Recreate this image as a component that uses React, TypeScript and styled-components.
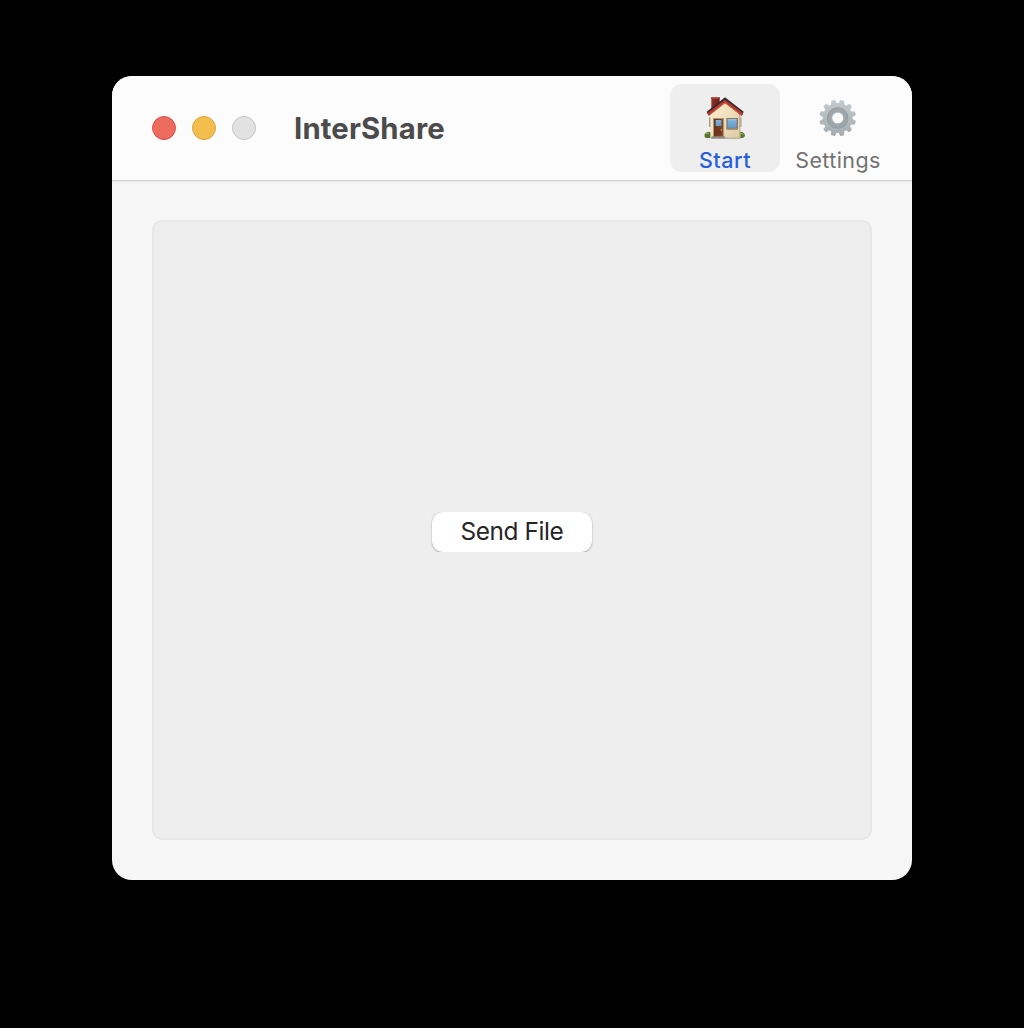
import React from "react";
import styled, { createGlobalStyle } from "styled-components";

const GlobalStyle = createGlobalStyle`
  * { box-sizing: border-box; }
  html, body { margin: 0; background: #000; }
  body { font-family: Inter, "Liberation Sans", sans-serif; -webkit-font-smoothing: antialiased; }
`;

const Desktop = styled.div`
  height: 1028px;
  padding: 76px 112px 148px;
  background: #000;
`;

const Window = styled.main`
  display: flex;
  flex-direction: column;
  height: 804px;
  border-radius: 20px;
  overflow: hidden;
  background: #f6f6f6;
`;

const TitleBar = styled.header`
  display: flex;
  align-items: center;
  height: 105px;
  padding: 0 19px 0 40px;
  background: #fcfcfc;
  border-bottom: 1px solid #cfcfcf;
`;

const TrafficLights = styled.div`
  display: flex;
  gap: 16px;
`;

const Light = styled.span<{ $fill: string; $edge: string }>`
  width: 24px;
  height: 24px;
  border-radius: 50%;
  background: ${(p) => p.$fill};
  border: 1px solid ${(p) => p.$edge};
`;

const Title = styled.h1`
  margin: 0 auto 0 38px;
  padding-top: 2px;
  font-size: 29.3px;
  font-weight: 650;
  line-height: 36px;
  letter-spacing: 0.15px;
  color: #4b4b4b;
`;

const Tabs = styled.nav`
  display: flex;
  gap: 3px;
`;

const Tab = styled.button<{ $active?: boolean }>`
  display: flex;
  flex-direction: column;
  align-items: center;
  gap: 4px;
  width: 110px;
  height: 88px;
  padding: 4px 0 0;
  border: 0;
  border-radius: 12px;
  background: ${(p) => (p.$active ? "#eeeeee" : "transparent")};
  color: ${(p) => (p.$active ? "#265fe0" : "#727272")};
  font: ${(p) => (p.$active ? 450 : 420)} 21.5px/24px Inter, "Liberation Sans", sans-serif;
  letter-spacing: ${(p) => (p.$active ? "0.5px" : "0.4px")};
  white-space: nowrap;
`;

const Icon = styled.svg`
  display: block;
  flex: none;
  width: 60px;
  height: 56px;
`;

const Content = styled.section`
  flex: 1;
  display: flex;
  padding: 39px 40px 40px;
  box-shadow: inset 0 1px 0 #ececec;
`;

const DropArea = styled.div`
  flex: 1;
  display: flex;
  align-items: center;
  justify-content: center;
  padding-top: 4px;
  border: 2px solid #e7e7e7;
  border-radius: 10px;
  background: #eeeeee;
`;

const SendButton = styled.button`
  width: 160px;
  height: 40px;
  padding: 0 0 1px;
  border: 0;
  border-radius: 11px;
  background: #fff;
  box-shadow: 0 0 1px rgba(0, 0, 0, 0.3), 0 1px 2px rgba(0, 0, 0, 0.25);
  clip-path: inset(0 -3px 0 -3px);
  color: #262626;
  font: 400 24.4px/39px Inter, "Liberation Sans", sans-serif;
  letter-spacing: -0.4px;
`;

const HouseIcon = () => (
  <Icon viewBox="0 0 180 168" aria-hidden="true">
    <defs>
      <linearGradient id="wall" x1="0" y1="0" x2="1" y2="1">
        <stop offset="0" stopColor="#fff0d0" />
        <stop offset="1" stopColor="#ddcba4" />
      </linearGradient>
      <linearGradient id="chimney" x1="0" y1="0" x2="1" y2="0">
        <stop offset="0" stopColor="#963128" />
        <stop offset="1" stopColor="#681f1a" />
      </linearGradient>
      <linearGradient id="door" x1="0" y1="0" x2="1" y2="0">
        <stop offset="0" stopColor="#65331e" />
        <stop offset="1" stopColor="#894829" />
      </linearGradient>
      <linearGradient id="glass" x1="0" y1="0" x2="0" y2="1">
        <stop offset="0" stopColor="#81b4dc" />
        <stop offset="1" stopColor="#609acb" />
      </linearGradient>
    </defs>
    <path d="M29 147q-3-11 8-15q12-3 16 8v10H33zM133 131q14-1 17 10q0 8-7 9h-10z" fill="#55742f" />
    <path d="M33 138q4-5 9-2M138 136q5 0 7 5" stroke="#8cab4c" strokeWidth="4" fill="none" />
    <path d="M43 88h4v29h-4zM136 88h3v29h-3z" fill="#81705c" />
    <path d="M90 40L46 75v75h90V75z" fill="url(#wall)" />
    <path d="M132 76h4v74h-4z" fill="#c5b38e" />
    <path d="M49 29h25v22L49 68z" fill="url(#chimney)" />
    <path d="M48 28h27v5H48z" fill="#a43a30" />
    <path d="M35 71L90 28l56 43-4 10-52-38-50 38z" fill="#302d31" />
    <path d="M37 75L90 35l54 40-4 9-50-38-49 38z" fill="#b5372d" />
    <path d="M44 80L90 44l48 37" fill="none" stroke="#d9634c" strokeWidth="3" />
    <path d="M54 90h33v57H54z" fill="#aa987b" />
    <path d="M57 93h27v54H57z" fill="url(#door)" />
    <path d="M62 96h17v18H62z" fill="url(#glass)" />
    <path d="M63 121h15v20H63z" fill="#70371f" />
    <circle cx="79" cy="126" r="2.5" fill="#e5af51" />
    <path d="M94 90h35v34H94z" fill="#8a7864" />
    <path d="M98 94h27v25H98z" fill="url(#glass)" />
    <path d="M98 94h27v3H98z" fill="#a6c9e5" />
    <path d="M94 121h35v4H94z" fill="#9b8870" />
    <path d="M51 145h38l4 7H47z" fill="#938d83" />
    <path d="M93 149h43v3H93z" fill="#ab9c7d" />
  </Icon>
);

const teeth = Array.from({ length: 12 }, (_, i) => i * 30 + 15);

const GearIcon = () => (
  <Icon viewBox="0 0 180 168" aria-hidden="true">
    <defs>
      <linearGradient id="metal" gradientUnits="userSpaceOnUse" x1="0" y1="-55" x2="0" y2="55">
        <stop offset="0" stopColor="#c4cbcf" />
        <stop offset="1" stopColor="#a4acb0" />
      </linearGradient>
    </defs>
    <g transform="translate(89 90)">
      <mask id="gear">
        <circle r="45" fill="#fff" />
        {teeth.map((angle) => (
          <path key={angle} d="M-9-40L-6.500-53Q-6-55-4-55H4Q6-55 6.500-53L9-40z" fill="#fff" transform={`rotate(${angle})`} />
        ))}
        <circle r="17" fill="#000" />
      </mask>
      <path d="M-60-60H60V60H-60z" fill="url(#metal)" mask="url(#gear)" />
      <circle r="24.500" fill="none" stroke="#9fa6aa" strokeWidth="14" />
      <circle r="31" fill="none" stroke="#8f989d" strokeWidth="2.500" />
      <circle r="18" fill="none" stroke="#b1b8bc" strokeWidth="2" />
    </g>
  </Icon>
);

export default function App() {
  return (
    <>
      <GlobalStyle />
      <Desktop>
        <Window>
          <TitleBar>
            <TrafficLights>
              <Light $fill="#ed6a5e" $edge="#d65347" />
              <Light $fill="#f4be4f" $edge="#d9a23a" />
              <Light $fill="#e2e2e2" $edge="#c3c3c3" />
            </TrafficLights>
            <Title>InterShare</Title>
            <Tabs>
              <Tab $active>
                <HouseIcon />
                Start
              </Tab>
              <Tab>
                <GearIcon />
                Settings
              </Tab>
            </Tabs>
          </TitleBar>
          <Content>
            <DropArea>
              <SendButton>Send File</SendButton>
            </DropArea>
          </Content>
        </Window>
      </Desktop>
    </>
  );
}
